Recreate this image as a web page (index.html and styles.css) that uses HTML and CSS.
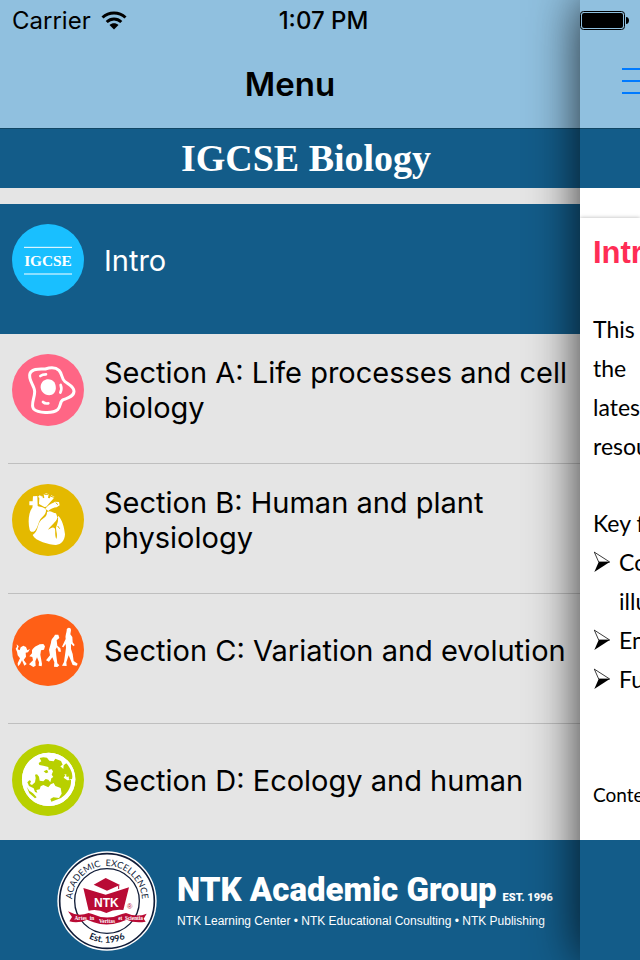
FILE: index.html
```html
<!DOCTYPE html>
<html lang="en">
<head>
    <meta charset="UTF-8">
    <meta name="viewport" content="width=device-width, initial-scale=1.0">
    <title>IGCSE Biology</title>
    <link rel="stylesheet" href="styles.css">
</head>
<body>
    <div class="app">
        <!-- Status bar, drawn over both panes -->
        <div class="status-bar">
            <div class="carrier">
                <span>Carrier</span>
                <svg class="wifi" viewBox="0 0 26 19" aria-hidden="true">
                    <path d="M1.5 6.5C8 .5 18 .5 24.500 6.500" fill="none" stroke="#000" stroke-width="3"/>
                    <path d="M5.700 11C10 7 16 7 20.300 11" fill="none" stroke="#000" stroke-width="3"/>
                    <path d="M8.500 14C11 11.600 15 11.600 17.500 14L13 18.500Z"/>
                </svg>
            </div>
            <div class="time">1:07 PM</div>
            <svg class="battery" viewBox="0 0 49 19" aria-hidden="true">
                <rect x=".5" y=".5" width="44" height="18" rx="3" fill="none" stroke="#000"/>
                <rect x="2" y="2" width="41" height="15" rx="2"/>
                <path d="M46 6C50 6 50 13 46 13Z"/>
            </svg>
        </div>

        <div class="drawer">
            <header class="nav-bar">
                <h1>Menu</h1>
            </header>
            <div class="subject">IGCSE Biology</div>

            <nav class="menu">
                <a href="#intro" class="menu-item active">
                    <svg class="icon" viewBox="36 42 216 216" aria-hidden="true">
                        <circle cx="144" cy="150" r="108" fill="#19bfff"/>
                        <path d="M72 112H216M72 192H216" stroke="#fff" stroke-width="3"/>
                        <text class="icon-text" x="144" y="167" text-anchor="middle">IGCSE</text>
                    </svg>
                    <span class="label">Intro</span>
                </a>
                <a href="#section-a" class="menu-item">
                    <svg class="icon" viewBox="36 42 216 216" aria-hidden="true">
                        <circle cx="144" cy="150" r="108" fill="#ff6685"/>
                        <path d="M90 100C97 84 119 87 136 87C149 83 166 81 177 91C187 101 184 116 195 125C207 134 222 140 222 154C221 171 202 174 190 179C178 184 184 198 173 209C158 222 113 219 101 207C91 195 104 175 104 155C104 136 83 120 90 100Z" fill="none" stroke="#fff" stroke-width="9"/>
                        <path d="M122 137C126 114 153 112 163 127C171 141 169 161 153 165C134 168 120 153 122 137Z" fill="#fff"/>
                        <path d="M121 108C126 104 133 103 138 103M182 135C186 145 184 152 181 158M129 186C134 191 139 191 145 190" fill="none" stroke="#fff" stroke-width="8" stroke-linecap="round"/>
                    </svg>
                    <span class="label">Section A: Life processes and cell biology</span>
                </a>
                <a href="#section-b" class="menu-item">
                    <svg class="icon" viewBox="36 42 216 216" aria-hidden="true">
                        <circle cx="144" cy="150" r="108" fill="#e4b900"/>
                        <g fill="#fff">
                            <path d="M99 79L112 78L113 108C123 112 133 111 138 119C139 133 128 139 121 148C114 160 114 172 105 182C97 188 91 186 89 179C83 157 86 126 97 113L98 106L88 106L88 94L98 94Z"/>
                            <path d="M117 102L118 84L114 80L120 75L127 78L129 85L133 83L131 73L139 70L146 73L144 84L149 85L154 76L163 80L160 86L149 98L139 110L133 111Z"/>
                            <path d="M136 116C146 102 157 101 165 95L177 96L179 106L170 112C159 113 151 117 145 123Z"/>
                            <path d="M141 126C151 120 159 130 168 130L173 144C169 155 154 165 144 179C153 174 159 169 164 175C168 183 163 192 169 207C174 195 168 184 168 173C171 163 175 157 174 137C187 147 193 174 195 193C194 211 184 224 168 225C148 224 106 214 98 195C117 182 110 164 123 151C134 142 141 139 141 126Z"/>
                        </g>
                        <path d="M121 76L127 78M133 73L145 73M153 79L162 82M167 98L174 104M162 171C168 165 171 157 173 144M173 168L179 176" fill="none" stroke="#e4b900" stroke-width="3"/>
                    </svg>
                    <span class="label">Section B: Human and plant physiology</span>
                </a>
                <a href="#section-c" class="menu-item">
                    <svg class="icon" viewBox="36 42 216 216" aria-hidden="true">
                        <circle cx="144" cy="150" r="108" fill="#ff5f16"/>
                        <g fill="#fff">
                            <path d="M50 133L56 139L53 148L59 151L62 142L70 137L78 141L82 151L90 147L84 157L77 158L78 170L71 180L80 192L73 197L66 181L60 193L54 199L53 190L60 175L53 166L51 155L47 146L51 140Z"/>
                            <path d="M96 151C102 140 113 137 119 133L130 132L135 139L132 149L123 151L121 164L126 192L125 199L116 197L117 187L111 172L106 184L107 197L100 201L87 193L99 181L97 171L88 169L96 160Z"/>
                            <path d="M153 128C154 115 161 113 165 104L175 104L178 114L170 121L172 137L181 145L183 155L176 155L171 142L167 148L169 167L172 190L178 196L172 201L162 200L163 187L157 172L147 185L138 181L150 166L147 149Z"/>
                            <path d="M197 117C195 107 199 101 200 92C199 82 213 80 213 91L211 103L217 111L218 127L224 135L221 139L213 131L213 147L218 162L221 183L233 191L230 197L218 195L206 166L199 187L200 198L186 197L192 186L195 165L198 143L197 132L190 142L186 140Z"/>
                        </g>
                    </svg>
                    <span class="label">Section C: Variation and evolution</span>
                </a>
                <a href="#section-d" class="menu-item">
                    <svg class="icon" viewBox="36 42 216 216" aria-hidden="true">
                        <circle cx="144" cy="150" r="108" fill="#b8d000"/>
                        <circle cx="146" cy="148" r="80" fill="#fff"/>
                        <path d="M119 84L130 82L141 83L148 92L161 94L166 86L183 93L188 104L181 109L190 117L191 106L199 100C216 119 219 137 216 147L207 149L206 139L214 136L201 141L196 136L191 143L202 151L213 150C215 173 200 192 183 204L154 215L151 207L160 202L177 204L185 191L182 174L166 168L161 159L152 163L145 172L130 165L122 169L119 178L109 180L112 188L105 186L101 175L87 168L82 157L88 151L93 153L90 162L96 165L105 157L107 144L105 134L111 133L117 140L119 152L130 154L137 147L145 149L151 157L154 145L160 141L155 134L159 124L154 117L146 120L145 111L130 107L118 105L116 99L124 94Z" fill="#b8d000"/>
                        <path d="M131 124L141 119L145 127L138 130ZM80 170L88 182L99 190L110 202L105 205L88 190Z" fill="#b8d000"/>
                        <path d="M193 132L200 134L197 139Z" fill="#fff"/>
                        <circle cx="146" cy="148" r="77" fill="none" stroke="#fff" stroke-width="6"/>
                    </svg>
                    <span class="label">Section D: Ecology and human</span>
                </a>
            </nav>

            <footer class="brand">
                <svg class="seal" viewBox="20 18 300 300" role="img" aria-label="NTK seal">
                    <circle cx="170" cy="168" r="149" fill="#fff"/>
                    <circle cx="170" cy="168" r="142" fill="none" stroke="#101c38" stroke-width="5"/>
                    <circle cx="170" cy="168" r="97" fill="none" stroke="#101c38" stroke-width="4"/>
                    <path id="arc-top" d="M65 168A105 105 0 0 1 275 168" fill="none"/>
                    <path id="arc-bottom" d="M45 168A125 125 0 0 0 295 168" fill="none"/>
                    <text class="seal-text"><textPath href="#arc-top" startOffset="50%" text-anchor="middle">ACADEMIC&#160; EXCELLENCE</textPath></text>
                    <text class="seal-year"><textPath href="#arc-bottom" startOffset="50%" text-anchor="middle">Est. 1996</textPath></text>
                    <path d="M99 129L166 149L236 127L219 195Q193 191 168 204Q142 191 115 197Z" fill="#b90b35"/>
                    <path d="M130 119L166 99L209 120L170 137Z" fill="#b90b35"/>
                    <path d="M138 128L169 144L198 127" fill="none" stroke="#fff" stroke-width="3"/>
                    <path d="M205 121V132" stroke="#b90b35" stroke-width="3"/>
                    <path d="M53 199Q82 216 115 204L126 207Q170 228 215 207L227 204Q259 218 289 206L280 221L286 230Q252 235 229 224L209 232Q168 245 130 232L110 224Q84 236 57 229L65 216Z" fill="#b90b35"/>
                    <text class="seal-ntk" x="168" y="185" text-anchor="middle">NTK</text>
                    <text class="seal-mark" x="238" y="191" text-anchor="middle">®</text>
                    <text class="seal-motto" x="91" y="224" text-anchor="middle">Artes</text>
                    <text class="seal-motto" x="125" y="224" text-anchor="middle">in</text>
                    <text class="seal-motto" x="170" y="233" text-anchor="middle">Veritas</text>
                    <text class="seal-motto" x="210" y="225" text-anchor="middle">et</text>
                    <text class="seal-motto" x="251" y="224" text-anchor="middle">Scientia</text>
                </svg>
                <div class="brand-text">
                    <div class="brand-name">
                        <strong>NTK Academic Group</strong>
                        <small>EST. 1996</small>
                    </div>
                    <div class="brand-sub">NTK Learning Center • NTK Educational Consulting • NTK Publishing</div>
                </div>
            </footer>
        </div>

        <!-- Main page, pushed to the side while the menu is open -->
        <main class="page">
            <div class="page-nav">
                <button class="menu-button" type="button" aria-label="Toggle menu">
                    <span></span><span></span><span></span>
                </button>
            </div>
            <div class="page-band"></div>
            <article class="card">
                <h2>Introduction</h2>
                <p>This<br>the<br>latest<br>resources</p>
                <p class="features-title">Key features</p>
                <ul>
                    <li>
                        <svg class="arrow" viewBox="0 0 16 20" aria-hidden="true"><path d="M1 1L15 10L5 10Z" fill="#fff" stroke="#000" stroke-width=".7"/><path d="M15 10L1 19L5 10Z"/></svg>
                        <span>Concise<br>illustrated</span>
                    </li>
                    <li>
                        <svg class="arrow" viewBox="0 0 16 20" aria-hidden="true"><path d="M1 1L15 10L5 10Z" fill="#fff" stroke="#000" stroke-width=".7"/><path d="M15 10L1 19L5 10Z"/></svg>
                        <span>English</span>
                    </li>
                    <li>
                        <svg class="arrow" viewBox="0 0 16 20" aria-hidden="true"><path d="M1 1L15 10L5 10Z" fill="#fff" stroke="#000" stroke-width=".7"/><path d="M15 10L1 19L5 10Z"/></svg>
                        <span>Full</span>
                    </li>
                </ul>
                <p class="note">Content</p>
            </article>
            <div class="page-footer"></div>
        </main>
    </div>
</body>
</html>
```
FILE: styles.css
```css
* {
    box-sizing: border-box;
}

body {
    margin: 0;
    font-family: Inter, "Liberation Sans", sans-serif;
    color: #000;
}

.app {
    position: relative;
    display: flex;
    height: 100vh;
    overflow: hidden;
}

/* Status bar */
.status-bar {
    position: absolute;
    top: 0;
    left: 0;
    right: 0;
    z-index: 2;
    display: grid;
    grid-template-columns: 1fr auto 1fr;
    align-items: center;
    height: 40px;
    padding: 0 11px 0 12px;
    font-size: 24px;
}

.carrier {
    display: flex;
    align-items: center;
    gap: 10px;
}

.wifi {
    width: 26px;
    height: 19px;
}

.time {
    padding-left: 6px;
    font-weight: 500;
}

.battery {
    width: 49px;
    height: 19px;
    justify-self: end;
}

/* Drawer */
.drawer {
    flex: 1;
    min-width: 0;
    display: flex;
    flex-direction: column;
    background-color: #e5e5e5;
}

.nav-bar {
    display: flex;
    align-items: center;
    justify-content: center;
    height: 128px;
    padding-top: 40px;
    background-color: #90c0df;
}

h1 {
    margin: 0;
    font-size: 33px;
    font-weight: 600;
}

.subject {
    height: 60px;
    padding-left: 32px;
    border-top: 1px solid #104664;
    background-color: #135c89;
    color: white;
    font-family: "Liberation Serif", serif;
    font-size: 38px;
    font-weight: bold;
    line-height: 58px;
    text-align: center;
}

.menu {
    flex: 1;
    min-height: 0;
    padding-top: 16px;
    overflow: hidden;
}

.menu-item {
    position: relative;
    display: flex;
    align-items: center;
    gap: 20px;
    height: 130px;
    padding: 0 12px 18px;
    color: #000;
    font-size: 29px;
    line-height: 35px;
    text-decoration: none;
}

.menu-item:not(.active)::after {
    content: "";
    position: absolute;
    left: 8px;
    right: 0;
    bottom: 0;
    height: 1px;
    background-color: #bfbfbf;
}

.menu-item.active {
    background-color: #135c89;
    color: white;
}

.icon {
    flex: none;
    width: 72px;
    height: 72px;
}

.icon-text {
    fill: white;
    font-family: "Liberation Serif", serif;
    font-size: 46px;
    font-weight: bold;
}

/* Footer */
.brand {
    display: flex;
    align-items: center;
    gap: 20px;
    height: 120px;
    padding: 2px 0 0 57px;
    background-color: #135c89;
    color: white;
    font-family: "Liberation Sans", sans-serif;
    white-space: nowrap;
}

.seal {
    flex: none;
    width: 100px;
    height: 100px;
}

.seal-text {
    fill: #101c38;
    font-family: Lato, sans-serif;
    font-size: 27px;
}

.seal-year {
    fill: #101c38;
    font-family: Lato, sans-serif;
    font-size: 27px;
    font-weight: bold;
}

.seal-ntk {
    fill: white;
    font-family: "Liberation Sans", sans-serif;
    font-size: 36px;
    font-weight: bold;
}

.seal-mark {
    fill: #b90b35;
    font-family: "Liberation Sans", sans-serif;
    font-size: 22px;
}

.seal-motto {
    fill: white;
    font-family: "Liberation Serif", serif;
    font-size: 16px;
    font-weight: bold;
}

.brand-name {
    display: flex;
    align-items: baseline;
    gap: 6px;
    line-height: 32px;
}

.brand-name strong {
    font-family: Roboto, sans-serif;
    font-size: 33px;
    font-weight: 900;
}

.brand-name small {
    font-family: Roboto, sans-serif;
    font-size: 11px;
    font-weight: 900;
}

.brand-sub {
    font-size: 12px;
    line-height: 14px;
}

/* Page behind the menu */
.page {
    position: relative;
    z-index: 1;
    flex: 0 0 60px;
    display: flex;
    flex-direction: column;
    overflow: hidden;
    background-color: white;
    box-shadow: 0 0 50px rgba(0, 0, 0, 0.8);
    white-space: nowrap;
}

.page-nav {
    height: 128px;
    padding: 68px 0 0 42px;
    background-color: #90c0df;
}

.menu-button {
    display: flex;
    flex-direction: column;
    gap: 10px;
    width: 36px;
    padding: 0;
    border: none;
    background: none;
    cursor: pointer;
}

.menu-button span {
    width: 100%;
    height: 2px;
    background-color: #007aff;
}

.page-band {
    height: 60px;
    border-top: 1px solid #104664;
    background-color: #135c89;
}

.card {
    flex: 1;
    min-height: 0;
    margin-top: 30px;
    padding: 15px 13px 0;
    box-shadow: 0 0 4px rgba(0, 0, 0, 0.3);
    font-family: Lato, sans-serif;
    font-size: 23px;
    line-height: 39px;
}

h2 {
    margin: 0 0 38px;
    color: #ff2d55;
    font-family: "Liberation Sans", sans-serif;
    font-size: 31px;
}

.card p,
.card ul {
    margin: 0;
    padding: 0;
}

.card .features-title {
    margin-top: 38px;
}

.card li {
    display: flex;
    gap: 8px;
    list-style: none;
}

.arrow {
    flex: none;
    width: 18px;
    height: 22px;
    margin-top: 8px;
}

.card .note {
    margin-top: 76px;
    font-size: 19px;
}

.page-footer {
    height: 120px;
    background-color: #135c89;
}
```
